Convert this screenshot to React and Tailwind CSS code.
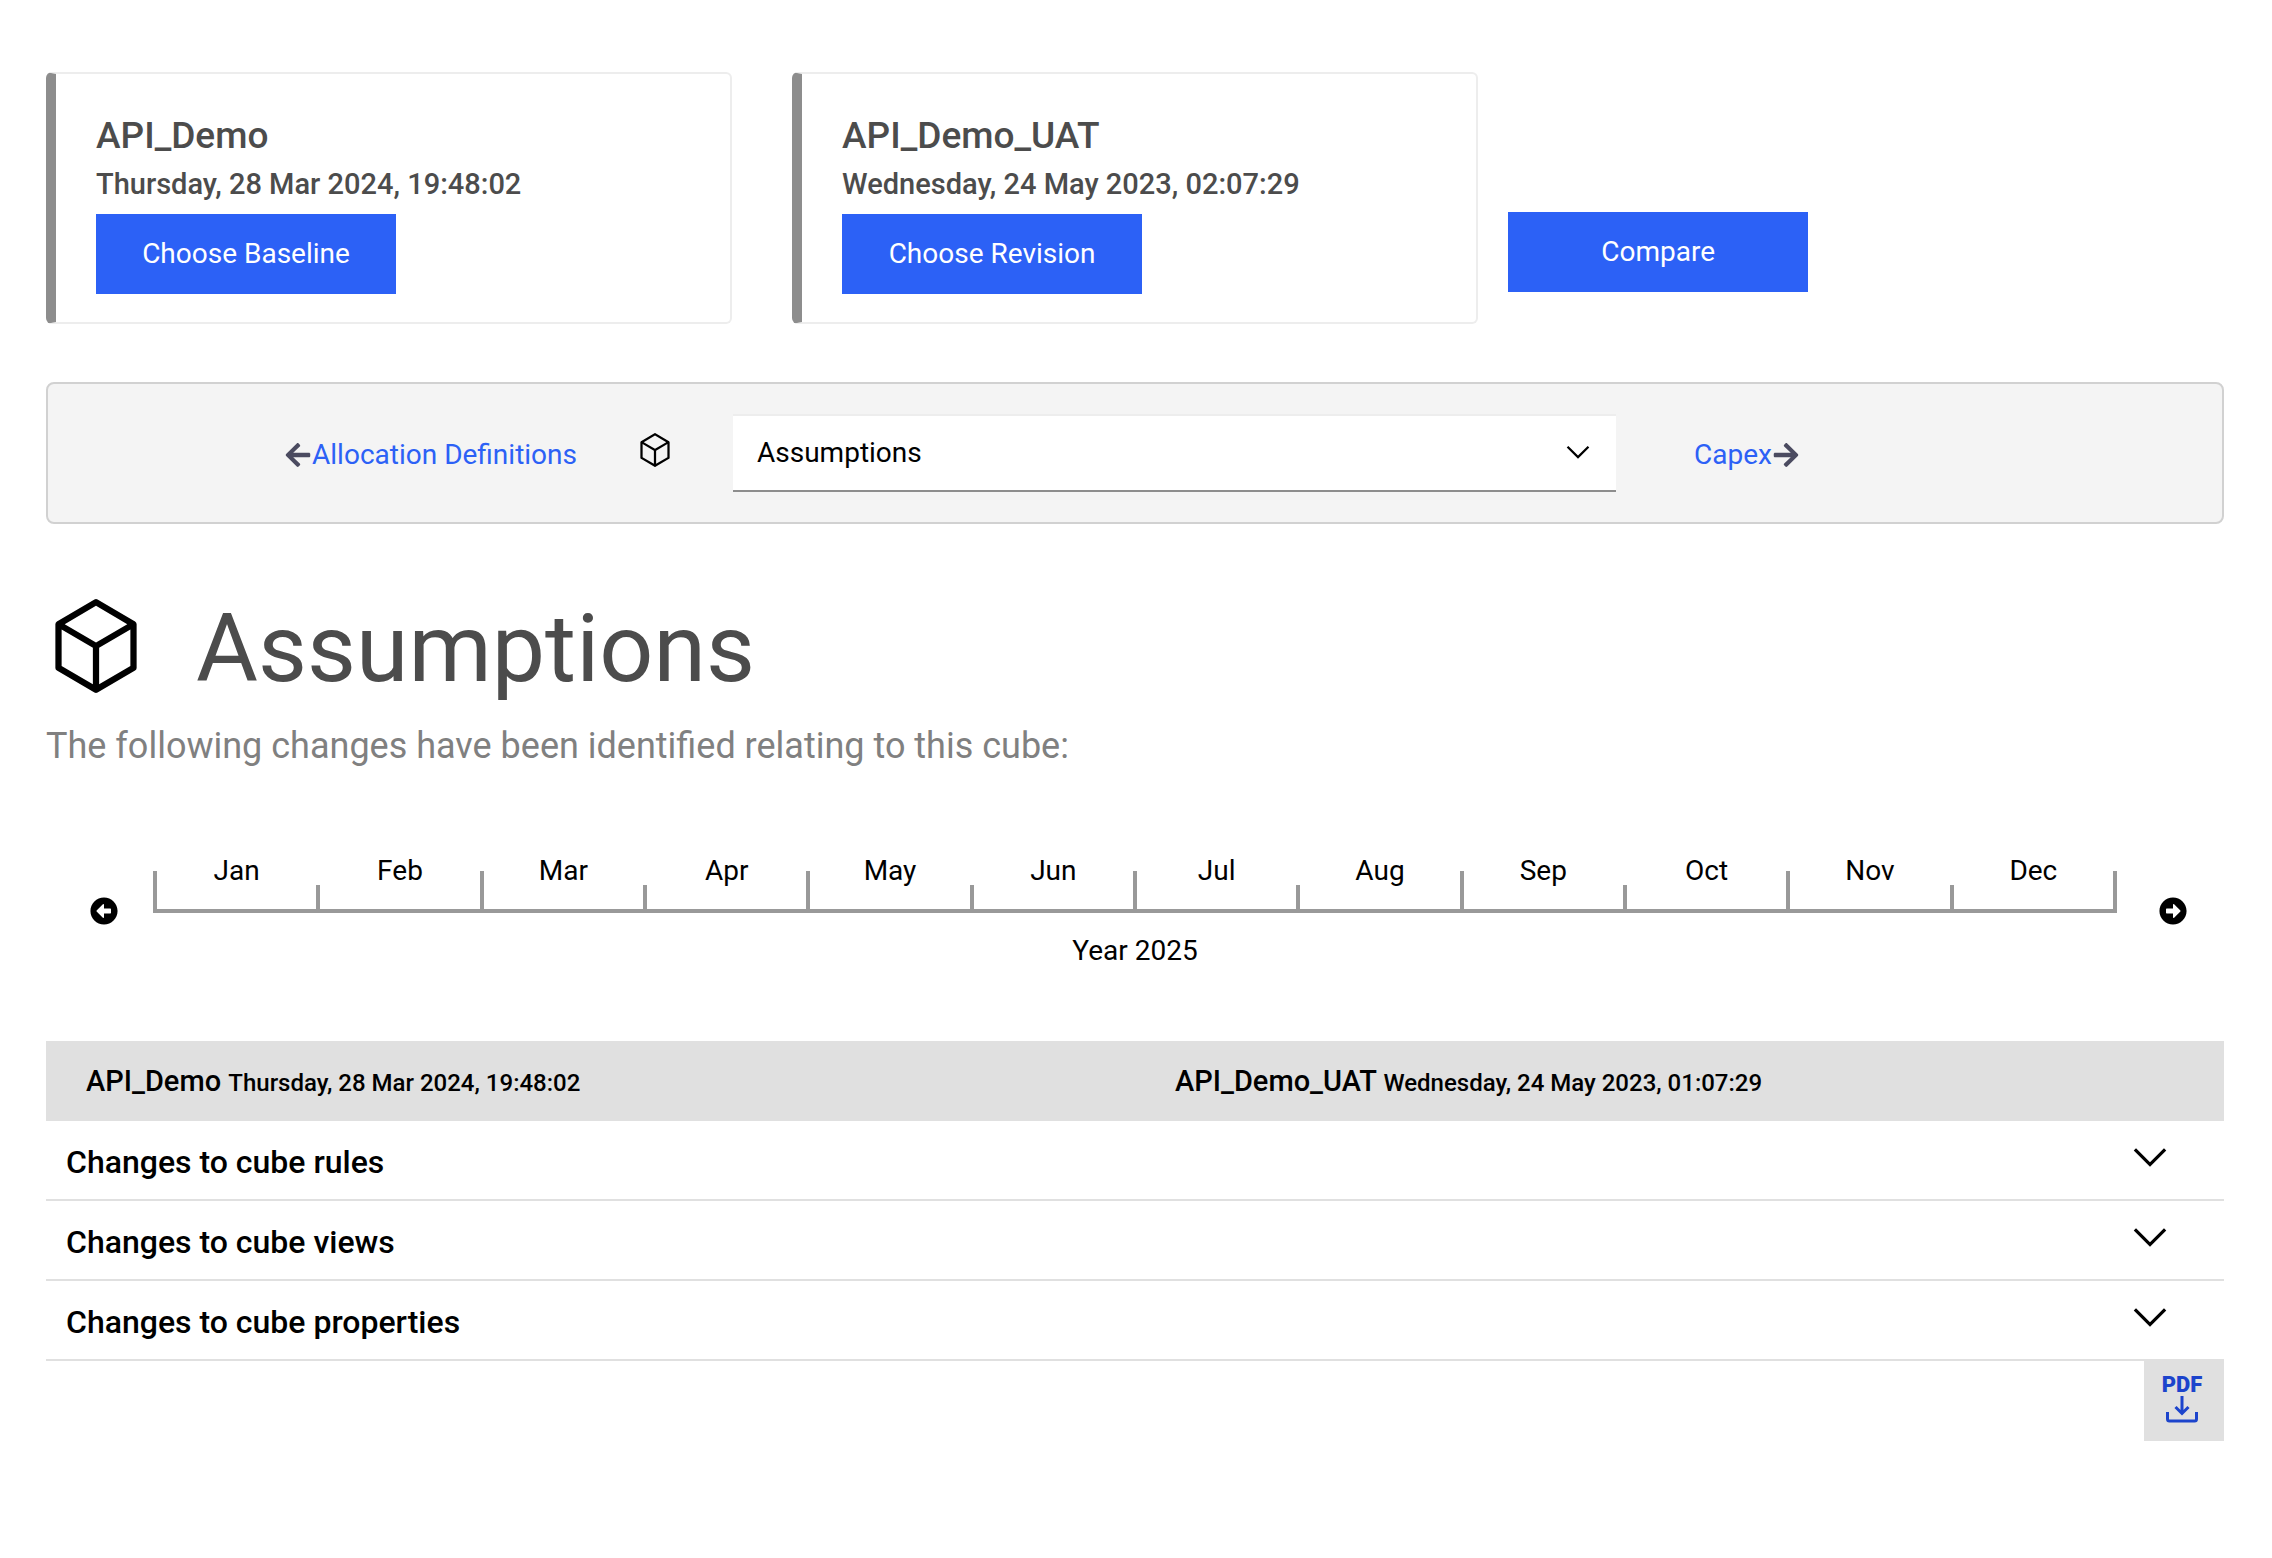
import { useState } from 'react';
import { FaArrowLeft, FaArrowRight, FaArrowAltCircleLeft, FaArrowAltCircleRight } from 'react-icons/fa';

const MONTHS = ['Jan', 'Feb', 'Mar', 'Apr', 'May', 'Jun', 'Jul', 'Aug', 'Sep', 'Oct', 'Nov', 'Dec'];

const CUBES = ['Allocation Definitions', 'Assumptions', 'Capex'];

const SECTIONS = ['Changes to cube rules', 'Changes to cube views', 'Changes to cube properties'];

const CubeIcon = ({ className }) => (
    <svg viewBox="0 0 32 32" fill="currentColor" className={className} aria-hidden="true">
        <path d="M28.504 8.136l-12-7a1 1 0 0 0-1.008 0l-12 7A1 1 0 0 0 3 9v14a1 1 0 0 0 .496.864l12 7a1 1 0 0 0 1.008 0l12-7A1 1 0 0 0 29 23V9a1 1 0 0 0-.496-.864ZM16 3.158 26.016 9 16 14.842 5.984 9ZM5 10.741l10 5.833v11.685L5 22.426Zm12 17.518V16.574l10-5.833v11.685Z" />
    </svg>
);

const ChevronIcon = ({ className }) => (
    <svg viewBox="0 0 32 32" fill="currentColor" className={className} aria-hidden="true">
        <path d="M16 22 6 12l1.4-1.4 8.6 8.6 8.6-8.6L26 12Z" />
    </svg>
);

const DownloadIcon = ({ className }) => (
    <svg viewBox="0 0 34 28" fill="none" stroke="currentColor" strokeWidth="3" className={className} aria-hidden="true">
        <path d="M17 0v17M10.500 11l6.500 6.500 6.500-6.500" />
        <path d="M2.500 16v7q0 2 2 2h25q2 0 2-2v-7" />
    </svg>
);

const PrimaryButton = ({ children, className = '' }) => (
    <button type="button" className={`h-20 w-[300px] bg-[#2c61f6] text-[28px] leading-10 text-white ${className}`}>
        {children}
    </button>
);

const SnapshotCard = ({ name, date, action, className = '' }) => (
    <div className={`w-[31.5%] rounded-md border-2 border-l-10 border-[#ededed] border-l-[#8d8d8d] pt-[38px] pr-7 pb-7 pl-10 text-[#4c4c4c] ${className}`}>
        <h2 className="text-[37px] leading-12 font-medium">{name}</h2>
        <p className="mt-1 mb-2.5 text-[29px] leading-10 font-medium">{date}</p>
        <PrimaryButton>{action}</PrimaryButton>
    </div>
);

const Timeline = ({ year, onChange }) => (
    <div className="mt-[81px] flex items-start pr-[37px] pl-11">
        <button type="button" aria-label="Previous year" className="mt-[46px]" onClick={() => onChange(year - 1)}>
            <FaArrowAltCircleLeft className="size-7" />
        </button>
        <div className="mr-[42px] ml-[35px] flex-1 text-center text-[28px] leading-10">
            <div className="border-b-4 border-[#999999] px-0.5">
                <div className="relative grid grid-cols-12">
                    {MONTHS.map((month, i) => (
                        <div key={month} className="relative pb-[18px]">
                            {month}
                            <span className={`absolute bottom-0 -left-0.5 w-1 bg-[#999999] ${i % 2 === 0 ? 'h-[38px]' : 'h-6'}`} />
                        </div>
                    ))}
                    <span className="absolute -right-0.5 bottom-0 h-[38px] w-1 bg-[#999999]" />
                </div>
            </div>
            <div className="mt-[18px]">Year {year}</div>
        </div>
        <button type="button" aria-label="Next year" className="mt-[46px]" onClick={() => onChange(year + 1)}>
            <FaArrowAltCircleRight className="size-7" />
        </button>
    </div>
);

const App = () => {
    const [cube, setCube] = useState('Assumptions');
    const [year, setYear] = useState(2025);

    return (
        <main className="min-h-screen bg-white pt-18 pr-12 pb-16 pl-[46px] font-[Roboto,sans-serif] text-black">
            <div className="flex items-end">
                <SnapshotCard name="API_Demo" date="Thursday, 28 Mar 2024, 19:48:02" action="Choose Baseline" />
                <SnapshotCard
                    name="API_Demo_UAT"
                    date="Wednesday, 24 May 2023, 02:07:29"
                    action="Choose Revision"
                    className="ml-[60px]"
                />
                <PrimaryButton className="mb-8 ml-[30px]">Compare</PrimaryButton>
            </div>

            <nav className="mt-[58px] grid grid-cols-[529fr_156fr_883fr_606fr] items-center rounded-lg border-2 border-[#d1d1d1] bg-[#f4f4f4] py-[30px] text-[28px] leading-10">
                <a href="#allocation-definitions" className="flex items-center justify-end pt-1 text-[#2c61f6]">
                    <FaArrowLeft className="text-[#4b4b60]" />
                    Allocation Definitions
                </a>
                <CubeIcon className="mb-1.5 size-9 justify-self-center" />
                <div className="relative">
                    <select
                        aria-label="Cube"
                        value={cube}
                        onChange={(e) => setCube(e.target.value)}
                        className="h-[78px] w-full appearance-none border-t-2 border-b-2 border-t-[#ededed] border-b-[#8d8d8d] bg-white pr-16 pl-6"
                    >
                        {CUBES.map((name) => (
                            <option key={name}>{name}</option>
                        ))}
                    </select>
                    <ChevronIcon className="pointer-events-none absolute top-5 right-5 size-9" />
                </div>
                <a href="#capex" className="flex items-center pt-1 pl-[78px] text-[#2c61f6]">
                    Capex
                    <FaArrowRight className="text-[#4b4b60]" />
                </a>
            </nav>

            <div className="mt-18 flex items-start">
                <CubeIcon className="size-[100px]" />
                <h1 className="ml-[50px] text-[95px] leading-[106px] text-[#4c4c4c]">{cube}</h1>
            </div>
            <p className="mt-5 text-[36px] leading-12 text-[#808080]">
                The following changes have been identified relating to this cube:
            </p>

            <Timeline year={year} onChange={setYear} />

            <section className="mt-[70px]">
                <div className="grid grid-cols-2 bg-[#e0e0e0] py-5 text-[29px] leading-10 font-medium">
                    <div className="pl-10">
                        API_Demo <span className="text-[24px] leading-6">Thursday, 28 Mar 2024, 19:48:02</span>
                    </div>
                    <div className="pl-10">
                        API_Demo_UAT <span className="text-[24px] leading-6">Wednesday, 24 May 2023, 01:07:29</span>
                    </div>
                </div>
                {SECTIONS.map((title) => (
                    <button
                        key={title}
                        type="button"
                        className="flex h-20 w-full items-center justify-between border-b-2 border-[#e0e0e0] pt-1 pr-12 pl-5 text-[32px] leading-10 font-medium"
                    >
                        {title}
                        <ChevronIcon className="mb-2.5 size-[52px]" />
                    </button>
                ))}
            </section>

            <button type="button" className="ml-auto flex size-20 flex-col items-center bg-[#e0e0e0] pt-[13px] pr-1 text-[#1c44cc]">
                <span className="text-[22px] leading-[22px] font-black">PDF</span>
                <DownloadIcon className="h-7 w-[34px]" />
            </button>
        </main>
    );
};

export default App;
